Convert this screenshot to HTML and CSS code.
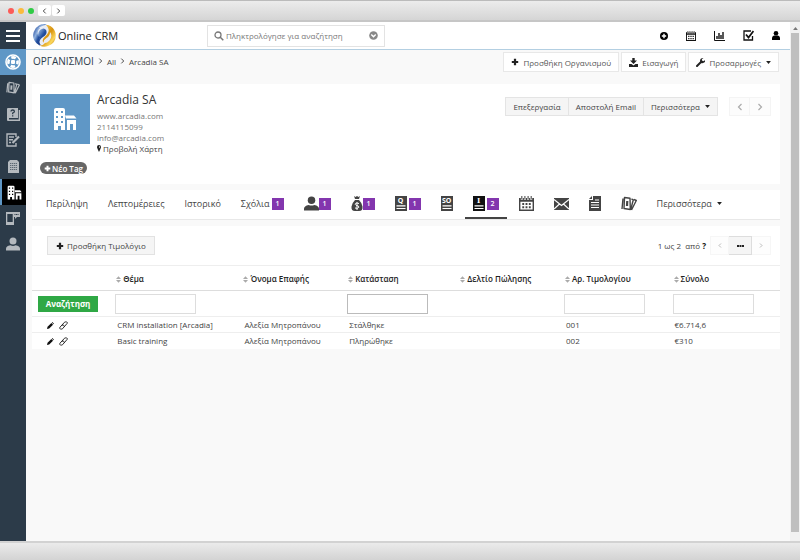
FILE: index.html
```html
<!DOCTYPE html>
<html lang="el">
  <head>
    <meta charset="utf-8" />
    <title>Online CRM - Arcadia SA</title>
    <link rel="stylesheet" href="styles.css">
  </head>

  <body>
    <!-- Shared icons -->
    <svg class="sprite" aria-hidden="true">
      <symbol id="tags" viewBox="0 0 16 16">
        <path d="M2 2.500L1 13M3.500 1.500l5.500.800.300 11.200-6.300-1zM10.500 3l1.800.8-2.500 9.500M13 3.500l2.300 1-4.800 9.500" fill="none" stroke="currentColor" stroke-width="1.400" stroke-linejoin="round"/>
        <path d="M6.300 5L6 10" stroke="currentColor" stroke-width="2.200"/>
      </symbol>
      <symbol id="building" viewBox="0 0 24 24">
        <path fill-rule="evenodd" fill="currentColor" d="M1 3q0-2 2-2h7q2 0 2 2v20H8v-4H5v4H1zM3 4v2h2V4zm5 0v2h2V4zM3 9v2h2V9zm5 0v2h2V9zm-5 5v2h2v-2zm5 0v2h2v-2z"/>
        <path fill="currentColor" d="M12 8.500h9l2.500 3h-10.500zM14 13h9v10h-3v-6h-3v6h-3z"/>
      </symbol>
      <symbol id="user" viewBox="0 0 16 16">
        <circle cx="8" cy="4.500" r="4" fill="currentColor"/>
        <path d="M0 15.500v-2q0-3 5-4 3 1.500 6 0 5 1 5 4v2z" fill="currentColor"/>
      </symbol>
      <symbol id="plus" viewBox="0 0 10 10">
        <path d="M5 1v8M1 5h8" stroke="currentColor" stroke-width="2.800"/>
      </symbol>
      <symbol id="calendar" viewBox="0 0 16 16">
        <path fill-rule="evenodd" fill="currentColor" d="M0 2h16v14H0zM1.500 6v8.500h13V6z"/>
        <path d="M3 0v4M6.300 0v4M9.700 0v4M13 0v4" stroke="#fff" stroke-width="2.200"/>
        <path d="M3 0v3.500M6.300 0v3.500M9.700 0v3.500M13 0v3.500" stroke="currentColor" stroke-width="1.100"/>
        <path d="M3.500 8.500h9M3.500 12h9" stroke="currentColor" stroke-width="2" stroke-dasharray="2 1.500"/>
      </symbol>
      <symbol id="caret" viewBox="0 0 8 5">
        <path d="M0 0h8L4 5z" fill="currentColor"/>
      </symbol>
      <symbol id="left" viewBox="0 0 8 10">
        <path d="M6 1L2 5l4 4" fill="none" stroke="currentColor" stroke-width="1.600"/>
      </symbol>
      <symbol id="right" viewBox="0 0 8 10">
        <path d="M2 1l4 4-4 4" fill="none" stroke="currentColor" stroke-width="1.600"/>
      </symbol>
      <symbol id="sort" viewBox="0 0 6 8">
        <path d="M0 3.300L3 0l3 3.300zM0 4.700L3 8l3-3.300z" fill="#aaa"/>
      </symbol>
      <symbol id="sheet" viewBox="0 0 12 15">
        <path d="M0 0h12v15H0z" fill="currentColor"/>
        <path d="M1.500 9.800h9M1.500 12.500h9" stroke="#fff" stroke-width="1.200"/>
      </symbol>
      <symbol id="pencil" viewBox="0 0 8 8">
        <path d="M0 8l.6-2.500L5 1.100 6.900 3 2.500 7.400zM5.500.600l.6-.6L8 1.900l-.6.600z" fill="currentColor"/>
      </symbol>
      <symbol id="eraser" viewBox="0 0 10 10">
        <path d="M1 7L6 1.500Q6.500 1 7.200 1h1.300q1 .500.600 1.600L4 8.500q-.500.500-1.200.500H1.600Q.600 8.500 1 7zM3.300 4.600h1.500q1 .300 1 1.500" fill="none" stroke="currentColor"/>
      </symbol>
    </svg>

    <header class="window-bar">
      <span class="dot red"></span>
      <span class="dot yellow"></span>
      <span class="dot green"></span>
      <button class="win-btn" aria-label="Back"><svg width="5" height="6"><use href="#left"/></svg></button>
      <button class="win-btn" aria-label="Forward"><svg width="5" height="6"><use href="#right"/></svg></button>
    </header>

    <div class="window">
      <nav class="sidebar">
        <button class="side-item menu" aria-label="Menu">
          <svg width="14" height="12" viewBox="0 0 14 12"><path d="M0 1h14M0 6h14M0 11h14" stroke="#fff" stroke-width="2"/></svg>
        </button>
        <a href="#" class="side-item help" aria-label="Support">
          <svg width="16" height="16" viewBox="0 0 16 16" fill="none" stroke="#fff">
            <circle cx="8" cy="8" r="7" stroke-width="1.600"/>
            <circle cx="8" cy="8" r="4.600" stroke-width="2.600" stroke-dasharray="4.600 2.626" stroke-dashoffset="2.300"/>
            <rect x="6" y="6" width="4" height="4" rx="1" fill="#fff" stroke="none"/>
          </svg>
        </a>
        <a href="#" class="side-item" aria-label="Tags"><svg width="14" height="14"><use href="#tags"/></svg></a>
        <a href="#" class="side-item" aria-label="FAQ">
          <svg width="13" height="13" viewBox="0 0 13 13"><path d="M0 1q0-1 1-1h10v10H2v1.500h9.700V2H13v11H1q-1 0-1-1z" fill="currentColor"/><path d="M4 3.500Q4 2 5.700 2t1.700 1.500Q7.400 4.500 5.700 5v1.200M5.700 7.200v1.400" fill="none" stroke="#2c3b49" stroke-width="1.300"/></svg>
        </a>
        <a href="#" class="side-item" aria-label="Notes">
          <svg width="14" height="14" viewBox="0 0 14 14" fill="none" stroke="currentColor" stroke-width="1.400"><path d="M10 4V1H1v12h9v-3M3 4h5M3 6.700h4M3 9.500h2"/><path d="M6.500 10l6.500-6.500" stroke-width="2.200"/></svg>
        </a>
        <a href="#" class="side-item" aria-label="Company">
          <svg width="11" height="13" viewBox="0 0 11 13"><path d="M0 2l2-2h7l2 2v11H0z" fill="currentColor"/><path d="M2 3.500h7M2 5.500h7M2 7.500h7M2 9.500h7" stroke="#5c6873" stroke-dasharray="1.300 .600"/></svg>
        </a>
        <a href="#" class="side-item current" aria-label="Organizations"><svg width="15" height="15"><use href="#building"/></svg></a>
        <a href="#" class="side-item" aria-label="Mobile">
          <svg width="14" height="14" viewBox="0 0 14 14"><path fill-rule="evenodd" d="M0 1h7v3h1v10H0zM1.300 3v8h5.400V3z" fill="currentColor"/><path d="M7 1h7v5h-3L9 8V6H7z" fill="currentColor"/><path d="M8.500 3.500h4" stroke="#2c3b49" stroke-dasharray="1 .500"/></svg>
        </a>
        <a href="#" class="side-item" aria-label="Contacts"><svg width="14" height="14"><use href="#user"/></svg></a>
      </nav>

      <main class="content">
        <div class="topbar">
          <a href="#" class="brand">
            <svg width="23" height="23" viewBox="0 0 23 23">
              <defs>
                <linearGradient id="blue" x2="1" y2="1"><stop offset="0" stop-color="#173b91"/><stop offset=".35" stop-color="#8fb1de"/><stop offset=".6" stop-color="#2350a0"/><stop offset="1" stop-color="#152c76"/></linearGradient>
                <linearGradient id="gold" x2="1" y2="1"><stop offset="0" stop-color="#f9d66a"/><stop offset=".5" stop-color="#d99511"/><stop offset=".75" stop-color="#fbd75b"/><stop offset="1" stop-color="#b56a08"/></linearGradient>
              </defs>
              <circle cx="11.500" cy="11.500" r="10.800" fill="#e9edf5"/>
              <path d="M14 .400A11.300 11.300 0 0 0 7 21.800Q5 16 10 13q5-3 3-7-2-3-6 0-2 2-2 5Q2 6 7 3q3-2 7-2.600z" fill="url(#blue)"/>
              <path d="M5 4Q0 8 .700 13 2 19 8 21.500 4 17 7 13 3 12 5 7q.500-2 2-3z" fill="url(#blue)"/>
              <path d="M15 1q6 2 7.500 8Q24 19 15 22q-4 1.500-8-.200 3 0 5-2.800 2 0 4.500-2.500Q20 12 17 8q0 4-3.500 6-3.500 2-3 5-2-3 1-6 5-4 4-8-.500-2-2.500-4z" fill="url(#gold)"/>
            </svg>
            <span>Online CRM</span>
          </a>
          <div class="search">
            <svg width="10" height="10" viewBox="0 0 10 10" fill="none" stroke="#777"><circle cx="4" cy="4" r="3" stroke-width="1.300"/><path d="M6.300 6.300L9.300 9.300" stroke-width="1.500"/></svg>
            <input type="text" aria-label="Αναζήτηση" placeholder="Πληκτρολόγησε για αναζήτηση">
            <svg width="9" height="9" viewBox="0 0 9 9"><circle cx="4.500" cy="4.500" r="4.300" fill="#888"/><path d="M2.300 3.500l2.200 2.200 2.200-2.200" fill="none" stroke="#fff" stroke-width="1.400"/></svg>
          </div>
          <div class="shortcuts">
            <button aria-label="Add"><svg width="8" height="8" viewBox="0 0 8 8"><circle cx="4" cy="4" r="4"/><path d="M4 1.800v4.400M1.800 4h4.400" stroke="#fff" stroke-width="1.400"/></svg></button>
            <button aria-label="Calendar"><svg width="10" height="10"><use href="#calendar"/></svg></button>
            <button aria-label="Reports"><svg width="11" height="10" viewBox="0 0 11 10" fill="none" stroke="currentColor"><path d="M.500 0v9.500H11"/><path d="M3 8V5M5 8V2M7 8V4M9 8V1" stroke-width="1.400"/></svg></button>
            <button aria-label="Tasks"><svg width="11" height="11" viewBox="0 0 11 11" fill="none" stroke="currentColor"><path d="M8 1H1v9h8.500V6" stroke-width="1.300"/><path d="M3 4.500l2.500 3L10.500 1" stroke-width="1.800"/></svg></button>
            <button aria-label="Profile"><svg width="8" height="9" viewBox="0 0 8 9"><circle cx="4" cy="2.300" r="2.300"/><path d="M0 9V7q0-2 2-2.500h4Q8 5 8 7v2z"/></svg></button>
          </div>
        </div>

        <div class="page-head">
          <nav class="crumbs">
            <a href="#" class="module">ΟΡΓΑΝΙΣΜΟΙ</a>
            <svg width="5" height="6"><use href="#right"/></svg>
            <a href="#">All</a>
            <svg width="5" height="6"><use href="#right"/></svg>
            <span>Arcadia SA</span>
          </nav>
          <div class="actions">
            <button class="btn-white"><svg width="8" height="8"><use href="#plus"/></svg>Προσθήκη Οργανισμού</button>
            <button class="btn-white"><svg width="9" height="9" viewBox="0 0 9 9"><path d="M3.300 0h2.400v2.500H8L4.500 6 1 2.500h2.300zM0 6h2.500l2 1.500 2-1.500H9v3H0z" fill="currentColor"/></svg>Εισαγωγή</button>
            <button class="btn-white"><svg width="9" height="9" viewBox="0 0 9 9"><path d="M1 8l4.500-4.500" stroke="currentColor" stroke-width="2" stroke-linecap="round"/><path d="M8.900 2.200L7.200 3.300 5.900 2.600V1.200L7.500.100Q4 0 4 3t3 2 1.900-2.800z" fill="currentColor"/></svg>Προσαρμογές<svg class="caret" width="5" height="3"><use href="#caret"/></svg></button>
          </div>
        </div>

        <section class="card summary">
          <div class="profile">
            <div class="avatar"><svg width="24" height="24"><use href="#building"/></svg></div>
            <div class="info">
              <h1>Arcadia SA</h1>
              <p>www.arcadia.com</p>
              <p>2114115099</p>
              <p>info@arcadia.com</p>
              <a href="#"><svg width="4" height="7" viewBox="0 0 4 7"><path fill-rule="evenodd" d="M2 0a2 2 0 0 1 2 2q0 1-2 5Q0 3 0 2a2 2 0 0 1 2-2zM2 1.200v1.600h.800V1.200z" fill="#222"/></svg>Προβολή Χάρτη</a>
            </div>
            <div class="record-actions">
              <div class="btn-group">
                <button>Επεξεργασία</button>
                <button>Αποστολή Email</button>
                <button>Περισσότερα<svg class="caret" width="5" height="3"><use href="#caret"/></svg></button>
              </div>
              <div class="btn-group pager">
                <button aria-label="Previous"><svg width="6" height="8"><use href="#left"/></svg></button>
                <button aria-label="Next"><svg width="6" height="8"><use href="#right"/></svg></button>
              </div>
            </div>
          </div>
          <button class="tag"><svg width="7" height="7"><use href="#plus"/></svg>Νέο Tag</button>
        </section>

        <nav class="card tabs">
          <a href="#">Περίληψη</a>
          <a href="#">Λεπτομέρειες</a>
          <a href="#">Ιστορικό</a>
          <a href="#">Σχόλια<span class="badge low">1</span></a>
          <a href="#" aria-label="Contacts"><svg width="15" height="15"><use href="#user"/></svg><span class="badge">1</span></a>
          <a href="#" aria-label="Opportunities"><svg width="12" height="15" viewBox="0 0 12 15"><path d="M3 0l1.500 1L6 0l1.500 1L9 0 8 3H4zM4 4h4q3 3 3.500 6.500Q12 15 8 15H4Q0 15 .500 10.500 1 7 4 4z" fill="currentColor"/><path d="M8 7.500Q4 6.500 4.300 8.500 5 9.500 6 9.600q2 .200 1.800 1.700Q7 13 4 12M6 6v8" fill="none" stroke="#fff"/></svg><span class="badge">1</span></a>
          <a href="#" aria-label="Quotes"><span class="doc"><svg width="12" height="15"><use href="#sheet"/></svg><b>Q</b></span><span class="badge">1</span></a>
          <a href="#" aria-label="Sales orders"><span class="doc"><svg width="12" height="15"><use href="#sheet"/></svg><b>SO</b></span></a>
          <a href="#" class="active" aria-label="Invoices"><span class="doc"><svg width="12" height="15"><use href="#sheet"/></svg><b class="slab">I</b></span><span class="badge">2</span></a>
          <a href="#" aria-label="Calendar"><svg width="15" height="15"><use href="#calendar"/></svg></a>
          <a href="#" aria-label="Email"><svg width="15" height="12" viewBox="0 0 15 12"><path d="M0 0h15v12H0z" fill="currentColor"/><path d="M0 1.500L7.500 7.500 15 1.500M0 11l5.500-5M15 11L9.500 6" fill="none" stroke="#fff" stroke-width="1.200"/></svg></a>
          <a href="#" aria-label="Documents"><svg width="12" height="15" viewBox="0 0 12 15"><path d="M4 0h8v15H0V4h4z" fill="currentColor"/><path d="M0 3l3-3v3z" fill="currentColor"/><path d="M2 6.500h8M2 9h8M2 11.500h8M6 4h4" stroke="#fff"/></svg></a>
          <a href="#" aria-label="Products"><svg width="16" height="16"><use href="#tags"/></svg></a>
          <a href="#">Περισσότερα<svg class="caret" width="5" height="3"><use href="#caret"/></svg></a>
        </nav>

        <section class="card related">
          <div class="list-bar">
            <button class="btn-gray"><svg width="8" height="8"><use href="#plus"/></svg>Προσθήκη Τιμολόγιο</button>
            <div class="paging">
              <span>1 ως 2&nbsp; από <b>?</b></span>
              <div class="btn-group">
                <button class="faint" aria-label="Previous page"><svg width="4" height="5"><use href="#left"/></svg></button>
                <button class="jump" aria-label="Go to page"><svg width="7" height="2" viewBox="0 0 7 2"><path d="M0 0h2v2H0zM2.500 0h2v2h-2zM5 0h2v2H5z" fill="#222"/></svg></button>
                <button class="faint" aria-label="Next page"><svg width="4" height="5"><use href="#right"/></svg></button>
              </div>
            </div>
          </div>

          <table>
            <colgroup>
              <col class="c-tools"><col class="c-subject"><col class="c-contact"><col class="c-status"><col class="c-order"><col class="c-number"><col class="c-total">
            </colgroup>
            <thead>
              <tr>
                <th></th>
                <th><svg width="5" height="7"><use href="#sort"/></svg>Θέμα</th>
                <th><svg width="5" height="7"><use href="#sort"/></svg>Όνομα Επαφής</th>
                <th><svg width="5" height="7"><use href="#sort"/></svg>Κατάσταση</th>
                <th><svg width="5" height="7"><use href="#sort"/></svg>Δελτίο Πώλησης</th>
                <th><svg width="5" height="7"><use href="#sort"/></svg>Αρ. Τιμολογίου</th>
                <th><svg width="5" height="7"><use href="#sort"/></svg>Σύνολο</th>
              </tr>
            </thead>
            <tbody>
              <tr class="filters">
                <td><button class="btn-search">Αναζήτηση</button></td>
                <td><input type="text" aria-label="Θέμα"></td>
                <td></td>
                <td><input type="text" class="dark" aria-label="Κατάσταση"></td>
                <td></td>
                <td><input type="text" aria-label="Αρ. Τιμολογίου"></td>
                <td><input type="text" aria-label="Σύνολο"></td>
              </tr>
              <tr>
                <td class="tools"><button aria-label="Edit"><svg width="7" height="7"><use href="#pencil"/></svg></button><button aria-label="Clear"><svg width="9" height="9"><use href="#eraser"/></svg></button></td>
                <td>CRM installation [Arcadia]</td>
                <td>Αλεξία Μητροπάνου</td>
                <td>Στάλθηκε</td>
                <td></td>
                <td>001</td>
                <td>€6.714,6</td>
              </tr>
              <tr>
                <td class="tools"><button aria-label="Edit"><svg width="7" height="7"><use href="#pencil"/></svg></button><button aria-label="Clear"><svg width="9" height="9"><use href="#eraser"/></svg></button></td>
                <td>Basic training</td>
                <td>Αλεξία Μητροπάνου</td>
                <td>Πληρώθηκε</td>
                <td></td>
                <td>002</td>
                <td>€310</td>
              </tr>
            </tbody>
          </table>
        </section>
      </main>

      <div class="scrollbar">
        <svg width="5" height="3" viewBox="0 0 8 5"><path d="M0 5h8L4 0z" fill="#777"/></svg>
        <div class="thumb"></div>
      </div>
    </div>

    <footer class="window-foot"></footer>
  </body>
</html>
```

FILE: styles.css
```css
* {
  box-sizing: border-box;
}

body {
  display: flex;
  flex-direction: column;
  min-height: 100vh;
  margin: 0;
  font-family: "Open Sans", "Noto Sans", sans-serif;
  font-size: 8px;
  line-height: 11px;
  color: #444;
  background: #f9f9f9;
}

a {
  color: inherit;
  text-decoration: none;
}

button,
input {
  margin: 0;
  padding: 0;
  border: none;
  background: none;
  font: inherit;
  color: inherit;
}

button {
  display: flex;
  align-items: center;
  justify-content: center;
  white-space: nowrap;
  cursor: pointer;
}

svg {
  flex: none;
}

.sprite {
  display: none;
}

.caret {
  margin-left: 5px;
  color: #222;
}

/* Browser window frame */
.window-bar {
  display: flex;
  align-items: center;
  gap: 4px;
  height: 22px;
  padding-left: 8px;
  border-top: 1px solid #bbb;
  border-bottom: 2px solid #c6c6c6;
  background: linear-gradient(#ececec, #d5d5d5);
}

.dot {
  width: 6px;
  height: 6px;
  border-radius: 50%;
}

.red {
  background: #fc5b57;
}

.yellow {
  background: #fbbb3c;
}

.green {
  background: #2fcb45;
}

.win-btn {
  width: 13px;
  height: 11px;
  border-radius: 2px;
  background: #fff;
}

.win-btn + .win-btn {
  margin-left: -3px;
}

.window {
  display: flex;
  flex: 1;
}

.window-foot {
  height: 19px;
  border-top: 2px solid #d2d2d2;
  background: linear-gradient(#ebebeb, #d3d3d3);
}

/* Left menu */
.sidebar {
  flex: none;
  width: 26px;
  background: #2c3b49;
  color: #b4b9be;
}

.side-item {
  display: flex;
  align-items: center;
  justify-content: center;
  width: 100%;
  height: 26px;
}

.side-item.menu {
  height: 27px;
}

.side-item.help {
  background: #5f97c6;
}

.side-item.current {
  border-left: 2px solid #5f97c6;
  background: #000;
  color: #fff;
}

.content {
  flex: 1;
  min-width: 0;
}

/* Top bar */
.topbar {
  display: grid;
  grid-template-columns: 174px 178px 1fr;
  align-items: center;
  height: 28px;
  padding: 0 10px 0 7px;
  border-bottom: 1px solid #b3cfe2;
  background: #fff;
}

.brand {
  display: flex;
  align-items: center;
  gap: 2px;
  font-size: 11px;
  color: #222;
}

.search {
  display: flex;
  align-items: center;
  gap: 2px;
  height: 22px;
  padding: 0 6px;
  border: 1px solid #e3e3e3;
}

.search input {
  flex: 1;
  min-width: 0;
  outline: none;
}

.search input::placeholder {
  color: #777;
}

.shortcuts {
  display: flex;
  justify-content: flex-end;
  gap: 18px;
  color: #111;
}

/* Breadcrumb row */
.page-head {
  display: flex;
  justify-content: space-between;
  height: 34px;
  padding: 2px 11px 0 7px;
}

.crumbs {
  display: flex;
  align-items: center;
  gap: 4px;
  height: 18px;
}

.crumbs .module {
  font-size: 10px;
  color: #2c3b49;
}

.actions {
  display: flex;
  gap: 2px;
}

.btn-white {
  gap: 4px;
  height: 20px;
  padding: 0 7px;
  border: 1px solid #e8e8e8;
  background: #fff;
  color: #555;
}

.btn-white svg,
.btn-gray svg {
  color: #222;
}

.btn-white .caret {
  margin-left: 1px;
}

.card {
  margin: 0 10px 6px 6px;
  background: #fff;
}

/* Organization summary */
.summary {
  height: 100px;
  padding: 10px 8px;
}

.profile {
  display: flex;
  gap: 7px;
}

.avatar {
  display: flex;
  align-items: center;
  justify-content: center;
  width: 50px;
  height: 50px;
  background: #5f97c6;
  color: #fff;
}

.info {
  color: #777;
}

.info h1 {
  margin: -2px 0 2px;
  font-size: 12px;
  font-weight: normal;
  line-height: 16px;
  color: #333;
}

.info p {
  margin: 0;
}

.info a {
  display: flex;
  align-items: center;
  gap: 2px;
  color: #444;
}

.record-actions {
  display: flex;
  gap: 11px;
  height: 19px;
  margin: 3px 1px 0 auto;
}

.btn-group {
  display: flex;
}

.btn-group button {
  height: 19px;
  padding: 0 7px;
  border: 1px solid #e4e4e4;
  background: #f5f5f5;
}

.btn-group button + button {
  border-left: none;
}

.record-actions .pager button {
  width: 21px;
  padding: 0;
  border-color: #f4f4f4;
  background: #fcfcfc;
  color: #aaa;
}

.tag {
  gap: 1px;
  height: 12px;
  margin-top: 8px;
  padding: 0 4px;
  border-radius: 6px;
  background: #666;
  color: #fff;
  font-weight: 600;
}

/* Related tabs */
.tabs {
  display: flex;
  gap: 4px;
  height: 30px;
  padding-left: 6px;
  border-bottom: 1px solid #e8e8e8;
  font-size: 9px;
}

.tabs a {
  display: flex;
  align-items: center;
  padding: 0 8px;
  border-bottom: 2px solid transparent;
}

.tabs a.active {
  border-bottom-color: #444;
  color: #111;
}

.badge {
  width: 12px;
  height: 12px;
  background: #8336ae;
  color: #fff;
  font-size: 7px;
  font-weight: 600;
  line-height: 12px;
  text-align: center;
}

.badge.low {
  margin-left: 2px;
}

.doc {
  position: relative;
  display: flex;
  margin-right: 2px;
}

.doc:last-child {
  margin-right: 0;
}

.doc b {
  position: absolute;
  top: 0;
  left: 0;
  right: 0;
  font-size: 7px;
  line-height: 9px;
  text-align: center;
  color: #fff;
}

.doc .slab {
  font-family: "DejaVu Serif", serif;
}

/* Invoice list */
.list-bar {
  display: flex;
  align-items: center;
  justify-content: space-between;
  height: 39px;
  padding: 0 9px 0 15px;
}

.btn-gray {
  gap: 3px;
  height: 19px;
  padding: 0 8px;
  border: 1px solid #e2e2e2;
  background: #f5f5f5;
}

.paging {
  display: flex;
  align-items: center;
  gap: 4px;
}

.paging b {
  color: #111;
}

.btn-group .faint {
  width: 19px;
  border-color: #f6f6f6;
  background: #fdfdfd;
  color: #aaa;
}

.btn-group .jump {
  width: 23px;
  border-color: #ddd;
}

table {
  width: 100%;
  table-layout: fixed;
  border-collapse: collapse;
}

.c-tools {
  width: 11%;
}

.c-subject {
  width: 17%;
}

.c-contact {
  width: 14%;
}

.c-status {
  width: 15%;
}

.c-order {
  width: 14%;
}

th,
td {
  height: 16px;
  padding: 0 0 0 3px;
  border-top: 1px solid #eee;
  text-align: left;
  white-space: nowrap;
}

th {
  height: 25px;
  padding-left: 2px;
  font-weight: 600;
  color: #222;
}

th svg {
  margin-right: 2px;
  vertical-align: -1px;
}

.filters td {
  height: 26px;
  padding-left: 1px;
  border-top-color: #ddd;
}

.filters td:first-child {
  padding-left: 6px;
}

.filters input {
  display: block;
  width: 81px;
  height: 20px;
  padding: 0 4px;
  border: 1px solid #ddd;
  background: #fff;
}

.filters .dark {
  border-color: #bbb;
}

.btn-search {
  width: 60px;
  height: 16px;
  background: #2fa845;
  color: #fff;
  font-weight: bold;
}

td.tools {
  padding-left: 15px;
  color: #111;
}

.tools button {
  display: inline-flex;
  margin-right: 5px;
  vertical-align: middle;
}

/* Page scrollbar */
.scrollbar {
  display: flex;
  flex-direction: column;
  align-items: center;
  gap: 3px;
  width: 10px;
  padding: 5px 1px 9px;
  background: #f1f1f1;
}

.thumb {
  flex: 1;
  width: 100%;
  background: #bfbfbf;
}
```
